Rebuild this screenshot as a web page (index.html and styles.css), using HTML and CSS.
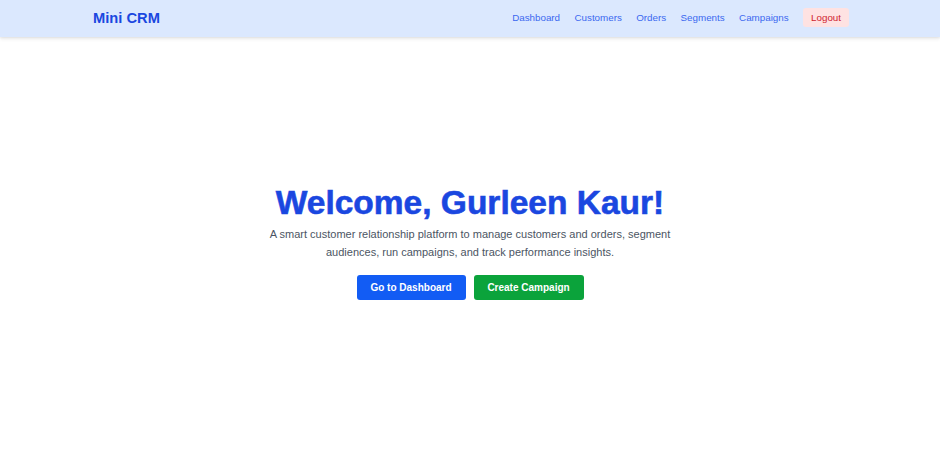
FILE: index.html
```html
<!DOCTYPE html>
<html lang="en">
<head>
<meta charset="utf-8">
<title>Mini CRM</title>
<link rel="stylesheet" href="styles.css">
</head>
<body>
<header class="navbar">
  <div class="nav-inner">
    <a class="brand" href="#">Mini CRM</a>
    <nav class="nav-links">
      <a href="#">Dashboard</a>
      <a href="#">Customers</a>
      <a href="#">Orders</a>
      <a href="#">Segments</a>
      <a href="#">Campaigns</a>
      <button class="logout">Logout</button>
    </nav>
  </div>
</header>
<main class="hero">
  <h1 class="hero-title">Welcome, Gurleen Kaur!</h1>
  <p class="hero-text">A smart customer relationship platform to manage customers and orders, segment audiences, run campaigns, and track performance insights.</p>
  <div class="hero-actions">
    <a class="btn btn-blue" href="#">Go to Dashboard</a>
    <a class="btn btn-green" href="#">Create Campaign</a>
  </div>
</main>
</body>
</html>
```

FILE: styles.css
```css
* { box-sizing: border-box; }
html, body { margin: 0; padding: 0; }
body {
  font-family: "Liberation Sans", Arial, sans-serif;
  background: #ffffff;
  height: 471px;
  overflow: hidden;
}
a { text-decoration: none; }

.navbar {
  background: #dbe8fe;
  height: 37px;
  box-shadow: 0 2px 4px rgba(0,0,0,0.08), 0 1px 2px rgba(0,0,0,0.06);
  position: relative;
}
.nav-inner {
  max-width: 768px;
  margin: 0 auto;
  padding: 0 5px 2px 7px;
  height: 100%;
  display: flex;
  align-items: center;
  justify-content: space-between;
}
.brand {
  font-size: 14.7px;
  font-weight: 700;
  color: #1a47e0;
}
.nav-links {
  display: flex;
  align-items: center;
  gap: 14.4px;
}
.nav-links a {
  font-size: 9.8px;
  color: #3b68f0;
}
.logout {
  font-family: inherit;
  font-size: 9.8px;
  color: #d0222e;
  background: #fee2e2;
  border: 0;
  border-radius: 3px;
  padding: 0 8px;
  height: 19px;
}

.hero {
  display: flex;
  flex-direction: column;
  align-items: center;
  text-align: center;
  padding-top: 146px;
}
.hero-title {
  margin: 0;
  font-size: 33.5px;
  font-weight: 800;
  color: #1a47e0;
  line-height: 40px;
  -webkit-text-stroke: 0.6px #1a47e0;
}
.hero-text {
  margin: 3px 0 0;
  max-width: 410px;
  font-size: 11px;
  line-height: 17.5px;
  color: #4b5563;
}
.hero-actions {
  display: flex;
  gap: 8px;
  margin-top: 14px;
}
.btn {
  display: inline-flex;
  align-items: center;
  justify-content: center;
  height: 25px;
  padding: 0;
  white-space: nowrap;
  font-size: 10px;
  font-weight: 700;
  color: #ffffff;
  border-radius: 3px;
}
.btn-blue { background: #125cf4; width: 109px; }
.btn-green { background: #0ba33b; width: 110px; }
```
